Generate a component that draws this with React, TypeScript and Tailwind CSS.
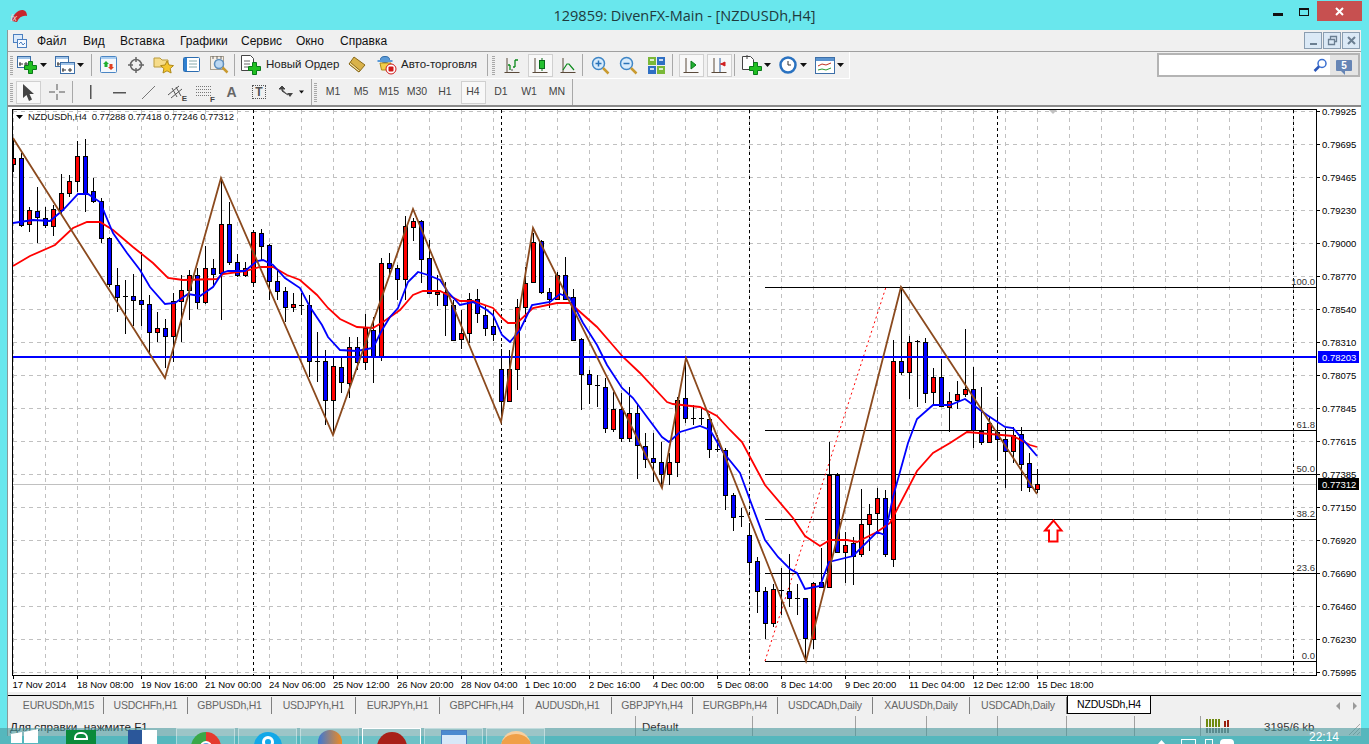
import React from "react";

type C = [number, number, number, number, "r" | "b" | "k"];
const candles: C[] = [
[158,164,138,172,"r"],[158,225,153,227,"b"],[210,224,207,232,"r"],[211,217,187,243,"b"],[218,225,207,228,"b"],[209,226,205,236,"r"],[193,210,174,215,"r"],[181,193,175,197,"r"],[156,181,141,192,"r"],[156,193,139,212,"b"],
[191,201,178,203,"b"],[201,238,198,243,"b"],[238,284,237,287,"b"],[285,297,268,312,"b"],[296,296,280,334,"k"],[296,300,274,326,"b"],[300,304,252,326,"b"],[304,332,295,353,"b"],[328,332,312,342,"r"],[328,336,319,368,"b"],
[301,336,293,362,"r"],[290,301,275,342,"r"],[275,290,270,320,"r"],[275,302,268,309,"b"],[268,302,246,304,"r"],[268,274,259,285,"b"],[224,273,178,320,"r"],[224,262,202,265,"b"],[262,275,254,277,"b"],[268,275,262,277,"r"],
[232,282,230,285,"r"],[233,246,229,260,"b"],[245,281,244,300,"b"],[281,291,270,300,"b"],[291,307,287,322,"b"],[304,307,293,312,"r"],[305,305,293,315,"k"],[305,361,295,377,"b"],[361,361,332,382,"k"],[361,400,350,425,"b"],
[366,400,357,435,"r"],[367,382,357,393,"b"],[347,383,337,398,"r"],[347,362,337,370,"b"],[328,362,314,370,"r"],[330,356,317,383,"b"],[263,356,258,361,"r"],[263,268,253,275,"b"],[268,279,265,300,"b"],[226,279,216,300,"r"],
[221,227,218,241,"r"],[221,259,220,283,"b"],[258,293,240,294,"b"],[292,294,275,306,"r"],[292,305,282,336,"b"],[305,340,300,341,"b"],[333,339,310,349,"r"],[299,333,293,343,"r"],[299,313,289,323,"b"],[315,328,305,336,"b"],
[326,334,310,341,"b"],[369,401,349,417,"b"],[369,401,350,402,"r"],[307,369,299,390,"r"],[283,307,267,322,"r"],[242,282,233,283,"r"],[241,292,240,294,"b"],[292,299,288,308,"b"],[275,299,272,300,"r"],[275,299,257,300,"b"],
[297,340,289,341,"b"],[339,374,338,410,"b"],[374,384,370,404,"b"],[385,385,375,407,"k"],[387,428,378,433,"b"],[409,429,392,432,"r"],[409,438,393,442,"b"],[413,438,387,442,"r"],[413,445,405,479,"b"],[446,459,433,468,"b"],
[458,462,433,482,"b"],[462,474,442,487,"b"],[462,474,453,485,"r"],[400,462,397,477,"r"],[398,418,358,423,"b"],[418,418,405,425,"k"],[418,418,408,425,"k"],[419,449,414,458,"b"],[449,449,435,452,"k"],[450,495,448,510,"b"],
[495,517,493,531,"b"],[516,516,508,527,"k"],[535,562,523,573,"b"],[561,591,557,613,"b"],[591,623,587,639,"b"],[589,623,584,627,"r"],[590,590,568,615,"k"],[591,598,554,607,"b"],[598,598,584,615,"k"],[598,638,598,660,"b"],
[583,639,582,649,"r"],[582,587,548,588,"b"],[475,587,442,588,"r"],[475,552,473,552,"b"],[545,552,532,583,"r"],[543,556,537,585,"b"],[524,554,489,557,"r"],[514,524,504,551,"r"],[498,513,488,533,"r"],[498,554,490,557,"b"],
[361,559,340,567,"r"],[361,372,287,375,"b"],[342,372,336,399,"r"],[341,341,340,407,"k"],[342,393,338,403,"b"],[377,392,368,404,"r"],[377,406,359,407,"b"],[401,407,392,432,"r"],[394,400,381,409,"r"],[389,394,329,397,"r"],
[389,430,367,448,"b"],[431,442,387,445,"b"],[423,442,417,443,"r"],[432,439,397,459,"b"],[439,451,428,488,"b"],[435,451,427,463,"r"],[434,464,427,491,"b"],[463,487,453,492,"b"],[484,489,469,493,"r"],
];

const blueMA = "13,223 33,220 50,221 63,210 78,194 88,194 100,202 113,233 127,253 140,270 150,287 165,304 175,303 188,294 200,296 213,287 222,273 228,271 245,271 257,261 263,260 273,265 285,278 300,288 310,307 322,325 328,337 340,350 357,351 373,348 382,330 390,317 398,308 408,282 418,272 428,275 440,280 448,292 460,305 473,302 487,310 493,315 502,335 510,342 520,330 532,305 550,302 560,294 570,298 583,323 597,345 607,365 622,388 633,398 647,417 662,437 669,442 680,432 700,426 710,430 723,452 740,473 750,500 765,540 778,557 790,569 797,573 805,589 820,586 829,562 853,556 877,532 885,535 893,497 908,443 917,419 933,405 950,405 965,399 987,415 1005,427 1013,428 1037,456";
const redMA = "13,266 30,256 55,245 73,228 87,222 100,222 113,230 133,247 153,263 168,278 183,280 217,279 223,274 245,271 260,267 273,267 287,275 300,280 317,295 328,308 340,319 357,327 373,328 383,322 400,310 413,295 423,291 440,291 450,296 460,301 473,301 493,308 502,318 508,323 517,323 533,308 557,303 570,303 597,327 623,357 640,373 667,402 673,404 700,407 717,416 730,430 742,442 750,457 765,485 793,518 805,536 820,546 830,540 847,540 857,542 877,532 890,523 917,471 933,453 950,443 967,432 1013,436 1030,445 1037,447";
const zig = "13,138 165,378 221,178 333,435 413,209 501,422 533,228 662,488 686,358 806,661 901,287 1037,494";

const prices = ["0.79925","0.79695","0.79465","0.79230","0.79000","0.78770","0.78540","0.78310","0.78075","0.77845","0.77615","0.77385","0.77150","0.76920","0.76690","0.76460","0.76230","0.75995"];
const dates = ["17 Nov 2014","18 Nov 08:00","19 Nov 16:00","21 Nov 00:00","24 Nov 06:00","25 Nov 12:00","26 Nov 20:00","28 Nov 04:00","1 Dec 10:00","2 Dec 16:00","4 Dec 00:00","5 Dec 08:00","8 Dec 14:00","9 Dec 20:00","11 Dec 04:00","12 Dec 12:00","15 Dec 18:00"];
const fibs: [number, string][] = [[287,"100.0"],[430,"61.8"],[474,"50.0"],[519,"38.2"],[573,"23.6"],[661,"0.0"]];
const gridX = Array.from({ length: 41 }, (_, i) => 13.5 + 32 * i);

function Chart() {
  return (
    <svg viewBox="7 107 1354 585" className="block w-[1354px] h-[585px] bg-white overflow-visible" fontSize="9.5" fill="#000">
      <defs><clipPath id="plot"><rect x="13" y="110" width="1303" height="565" /></clipPath></defs>
      <g clipPath="url(#plot)">
        <g stroke="#c0c0c0" strokeDasharray="4 4" shapeRendering="crispEdges">
          {gridX.map((x) => <line key={x} x1={x} x2={x} y1="110" y2="675" />)}
          {prices.map((_, i) => <line key={i} x1="13" x2="1316" y1={111.5 + 33 * i} y2={111.5 + 33 * i} />)}
        </g>
        <g stroke="#000" strokeDasharray="3 3" shapeRendering="crispEdges">
          {[253.5, 501.5, 749.5, 997.5, 1293.5].map((x) => <line key={x} x1={x} x2={x} y1="110" y2="675" />)}
        </g>
        <line x1="13" x2="1316" y1="484.5" y2="484.5" stroke="#c0c0c0" shapeRendering="crispEdges" />
        <g stroke="#000" shapeRendering="crispEdges">
          {fibs.map(([y]) => <line key={y} x1="765" x2="1316" y1={y + 0.5} y2={y + 0.5} />)}
        </g>
        <line x1="765" y1="661" x2="886" y2="287" stroke="#f00" strokeDasharray="2 3" />
        <g shapeRendering="crispEdges">
          {candles.map((c, i) => {
            const x = 13.5 + 8 * i;
            return (
              <g key={i}>
                <line x1={x} x2={x} y1={c[2]} y2={c[3]} stroke="#000" />
                {c[4] === "k"
                  ? <line x1={x - 2.5} x2={x + 2.5} y1={c[0] + 0.5} y2={c[0] + 0.5} stroke="#000" />
                  : <rect x={x - 2} y={c[0] + 0.5} width="4" height={c[1] - c[0]} fill={c[4] === "r" ? "#ff0000" : "#0000ff"} stroke="#000" />}
              </g>
            );
          })}
        </g>
        <polyline points={redMA} fill="none" stroke="#ff0000" strokeWidth="1.8" />
        <polyline points={blueMA} fill="none" stroke="#0000ff" strokeWidth="1.8" />
        <line x1="13" x2="1316" y1="357" y2="357" stroke="#0000ff" strokeWidth="2" shapeRendering="crispEdges" />
        <polyline points={zig} fill="none" stroke="#8b4a1e" strokeWidth="1.8" />
        <path d="M1053.5 520.5 L1061.5 530.5 L1057.5 530.5 L1057.5 541.5 L1049 541.5 L1049 530.5 L1045 530.5 Z" fill="#fff" stroke="#f00" strokeWidth="2" />
        <path d="M1049 110 h8 l-4 4 Z" fill="#c0c0c0" />
      </g>
      {fibs.map(([y, t]) => <text key={t} x="1315" y={y - 2} textAnchor="end" fill="#333">{t}</text>)}
      <rect x="12.5" y="109.5" width="1304" height="566" fill="none" stroke="#000" shapeRendering="crispEdges" />
      {prices.map((p, i) => (
        <g key={p}>
          <line x1="1317" x2="1320" y1={111.5 + 33 * i} y2={111.5 + 33 * i} stroke="#000" shapeRendering="crispEdges" />
          <text x="1322" y={114.5 + 33 * i}>{p}</text>
        </g>
      ))}
      <rect x="1318" y="351" width="41" height="12" fill="#0000ff" />
      <text x="1322" y="360.5" fill="#fff">0.78203</text>
      <rect x="1318" y="478" width="41" height="12" fill="#000" />
      <text x="1322" y="487.5" fill="#fff">0.77312</text>
      {dates.map((d, i) => (
        <g key={d}>
          <line x1={13.5 + 64 * i} x2={13.5 + 64 * i} y1="676" y2="679" stroke="#000" shapeRendering="crispEdges" />
          <text x={(i === 0 ? 12.5 : 13 + 64 * i)} y="688">{d}</text>
        </g>
      ))}
      <path d="M16 115 h7 l-3.5 4 Z" fill="#000" />
      <text x="28" y="120" fontSize="9.5" letterSpacing="-0.1" fill="#111" xmlSpace="preserve">{"NZDUSDh,H4  0.77288 0.77418 0.77246 0.77312"}</text>
    </svg>
  );
}

const Caret = ({ cls }: { cls: string }) => (
  <div className={`flex items-center justify-center shrink-0 ${cls}`}>
    <svg width="7" height="4" viewBox="0 0 7 4"><path d="M0 0h7L3.5 4z" fill="#111" /></svg>
  </div>
);
const Sep = ({ cls = "" }: { cls?: string }) => <div className={`w-[1px] h-[22px] bg-[#a8a8a8] shrink-0 ${cls}`} />;
const Grip = ({ cls = "" }: { cls?: string }) => <div className={`w-[3px] h-[19px] shrink-0 bg-[repeating-linear-gradient(to_bottom,#a8a8a8_0,#a8a8a8_1px,transparent_1px,transparent_2px)] ${cls}`} />;
const Btn = ({ children, cls = "w-[28px]", on = false }: { children?: React.ReactNode; cls?: string; on?: boolean }) => (
  <div className={`h-[24px] flex items-center justify-center shrink-0 ${cls}`}>
    {on ? <div className="w-[25px] h-[23px] flex items-center justify-center bg-[#f8f8f8] border border-[#d0d0d0]">{children}</div> : children}
  </div>
);

const Win = ({ x, y, w = 14, h = 12 }: { x: number; y: number; w?: number; h?: number }) => (
  <g>
    <rect x={x + 0.5} y={y + 0.5} width={w} height={h} fill="#fff" stroke="#3d6fa8" />
    <rect x={x + 1} y={y + 1} width={w - 1} height="2" fill="#9fc3e8" />
    <path d={`M${x + 3} ${y + 6}v4M${x + 2} ${y + 8}h4M${x + w - 4} ${y + 6}v4M${x + w - 6} ${y + 8}h4`} stroke="#333" fill="none" />
  </g>
);
const Plus = ({ x, y }: { x: number; y: number }) => (
  <path d={`M${x + 4} ${y}h4v4h4v4h-4v4h-4v-4h-4v-4h4z`} fill="#21c021" stroke="#0a7a1a" />
);
const IconNew = () => <svg width="22" height="20" viewBox="0 0 22 20"><Win x={0} y={1} w={13} h={11} /><Plus x={7.5} y={6.5} /></svg>;
const IconProf = () => <svg width="22" height="20" viewBox="0 0 22 20"><Win x={1} y={1} w={13} h={10} /><Win x={6} y={7} w={14} h={11} /></svg>;
const IconMarket = () => (
  <svg width="18" height="18" viewBox="0 0 18 18"><rect x="0.5" y="0.5" width="16" height="16" rx="1" fill="#f4f8fc" stroke="#4b86c4" /><rect x="1" y="1" width="15" height="2" fill="#a9cdf0" /><path d="M6 5l3 3H7.5v3h-3V8H3z" fill="#20b030" /><path d="M11 14l3-3h-1.5V8h-3v3H8z" fill="#e04020" /></svg>
);
const IconNav = () => (
  <svg width="18" height="18" viewBox="0 0 18 18" fill="none" stroke="#666"><circle cx="9" cy="9" r="5.5" strokeWidth="1.5" /><path d="M9 1v5M9 12v5M1 9h5M12 9h5" strokeWidth="1.5" /></svg>
);
const IconFav = () => (
  <svg width="22" height="20" viewBox="0 0 22 20"><path d="M1 3h6l2 2h6v7H1z" fill="#f6dc8a" stroke="#b99a3a" /><path d="M14 6l2 4 4.500 .6-3.300 3 .9 4.400-4.100-2.200-4 2.200 .9-4.400-3.300-3 4.500-.6z" fill="#f5c62e" stroke="#b08a18" /></svg>
);
const IconTerm = () => (
  <svg width="18" height="16" viewBox="0 0 18 16"><rect x="0.5" y="0.5" width="16" height="14" rx="1" fill="#fff" stroke="#2b6cb0" /><rect x="1" y="1" width="3" height="13" fill="#2f80d0" /><path d="M6 4h8M6 7h8M6 10h8" stroke="#8aa" /></svg>
);
const IconTester = () => (
  <svg width="20" height="20" viewBox="0 0 20 20"><rect x="0.5" y="1.500" width="13" height="13" fill="#f5efe6" stroke="#a8a090" /><path d="M3 1v3M7 1v3M11 1v3" stroke="#666" /><circle cx="9" cy="9" r="4.500" fill="#bcd8f2" stroke="#5f8fbd" strokeWidth="1.500" /><path d="M12.500 12.500l5 5" stroke="#c99a30" strokeWidth="2.500" /></svg>
);
const IconOrder = () => (
  <svg width="22" height="22" viewBox="0 0 22 22"><path d="M1.500 1.500h9l3 3v12h-12z" fill="#fff" stroke="#444" /><path d="M4 7h6M4 10h6M4 13h4" stroke="#666" /><Plus x={8.5} y={8.5} /></svg>
);
const IconBook = () => (
  <svg width="18" height="18" viewBox="0 0 18 18"><path d="M6 1l11 8-6 7-10-8z" fill="#d9b24a" stroke="#8a6a1a" /><path d="M1 8l10 8 1-1.500L2.500 6.500z" fill="#f5e3a6" stroke="#8a6a1a" /></svg>
);
const IconAuto = () => (
  <svg width="20" height="20" viewBox="0 0 20 20"><ellipse cx="8" cy="4.500" rx="4.500" ry="3" fill="#5b9bd8" stroke="#2f6aa6" /><path d="M0.500 6h15" stroke="#5b9bd8" strokeWidth="2" /><path d="M3 8h11l-1.500 7h-8z" fill="#f2cf4a" stroke="#b08a18" /><circle cx="14" cy="14" r="5" fill="#fff" stroke="#d01818" strokeWidth="1" /><rect x="11.500" y="11.500" width="5" height="5" rx="1" fill="#d01818" /></svg>
);
const Axes = () => <path d="M3 1v15M0.500 15.500h15" stroke="#5a4a3a" fill="none" />;
const IconBars = () => <svg width="16" height="17" viewBox="0 0 16 17" fill="none"><Axes /><path d="M6 13v-5M6 8H4M11 10V3M11 3h3M11 10H9" stroke="#0a8a1a" strokeWidth="1.300" /><path d="M7 13h2" stroke="#555" /></svg>;
const IconCandle = () => <svg width="17" height="17" viewBox="0 0 17 17" fill="none"><Axes /><path d="M10 1v13" stroke="#0a6a1a" /><rect x="7.500" y="3.500" width="5" height="8" fill="#24c030" stroke="#0a6a1a" /></svg>;
const IconLine = () => <svg width="16" height="17" viewBox="0 0 16 17" fill="none"><Axes /><path d="M3 13l4-6 2 0 5 6" stroke="#0a8a1a" strokeWidth="1.200" /></svg>;
const IconZoom = ({ plus }: { plus: boolean }) => (
  <svg width="19" height="19" viewBox="0 0 19 19" fill="none"><circle cx="7.500" cy="7.500" r="6" fill="#d8ebfb" stroke="#3f86c6" strokeWidth="1.500" /><path d="M4.500 7.500h6" stroke="#2a73b8" strokeWidth="1.500" />{plus && <path d="M7.500 4.500v6" stroke="#2a73b8" strokeWidth="1.500" />}<path d="M12 12l5.500 5.500" stroke="#c99a30" strokeWidth="2.500" /></svg>
);
const IconTile = () => (
  <svg width="17" height="17" viewBox="0 0 17 17"><rect width="8" height="8" fill="#7ab838" /><rect x="9" width="8" height="8" fill="#2f6fc4" /><rect y="9" width="8" height="8" fill="#2f6fc4" /><rect x="9" y="9" width="8" height="8" fill="#7ab838" /><path d="M2 3h4M11 3h4M2 12h4M11 12h4" stroke="#fff" strokeWidth="1.500" /></svg>
);
const IconScroll = () => <svg width="17" height="17" viewBox="0 0 17 17" fill="none"><Axes /><path d="M8 4l5 4-5 4z" fill="#20b030" stroke="#0a7a1a" /></svg>;
const IconShift = () => <svg width="17" height="17" viewBox="0 0 17 17" fill="none"><Axes /><path d="M9 1v14" stroke="#2a5a9a" /><path d="M10 7l4-2v4zM9 7h5" fill="#d02020" stroke="#d02020" /></svg>;
const IconInd = () => (
  <svg width="22" height="22" viewBox="0 0 22 22"><path d="M1.500 2.500h8l3 3v10h-11z" fill="#fff" stroke="#444" /><path d="M6 1v4" stroke="#444" /><Plus x={8.5} y={8.5} /></svg>
);
const IconClock = () => (
  <svg width="18" height="18" viewBox="0 0 18 18" fill="none"><circle cx="9" cy="9" r="7.500" fill="#fff" stroke="#2a72c0" strokeWidth="2.500" /><path d="M9 5v4h3" stroke="#333" /></svg>
);
const IconTmpl = () => (
  <svg width="20" height="17" viewBox="0 0 20 17"><rect x="0.500" y="0.500" width="19" height="16" fill="#fff" stroke="#3d6fa8" /><rect x="1" y="1" width="18" height="3" fill="#5b94d0" /><path d="M3 9l4-2 4 1 5-2" stroke="#c03020" fill="none" /><path d="M3 13l4-1 4 1 5-2" stroke="#2a9a30" fill="none" /></svg>
);
const T = ({ children, cls }: { children: React.ReactNode; cls: string }) => <div className={`text-[11.5px] whitespace-nowrap text-[#222] shrink-0 ${cls}`}>{children}</div>;
const Tf = ({ t, on = false }: { t: string; on?: boolean }) => (
  <Btn on={on}><span className="text-[10.5px] text-[#444]">{t}</span></Btn>
);

const menu: [string, string][] = [["Файл","w-[46px]"],["Вид","w-[37px]"],["Вставка","w-[60px]"],["Графики","w-[61px]"],["Сервис","w-[55px]"],["Окно","w-[44px]"],["Справка","w-[60px]"]];
const tabs: [string, string][] = [["EURUSDh,M15","w-[90px]"],["USDCHFh,H1","w-[84px]"],["GBPUSDh,H1","w-[84px]"],["USDJPYh,H1","w-[84px]"],["EURJPYh,H1","w-[84px]"],["GBPCHFh,H4","w-[84px]"],["AUDUSDh,H1","w-[88px]"],["GBPJPYh,H4","w-[81px]"],["EURGBPh,H4","w-[85px]"],["USDCADh,Daily","w-[95px]"],["XAUUSDh,Daily","w-[97px]"],["USDCADh,Daily","w-[97px]"]];
const status = ["w-[117px]","w-[103px]","w-[71px]","w-[71px]","w-[69px]","w-[68px]","w-[66px]"];

export default function App() {
  return (
    <div className="relative w-[1369px] h-[744px] overflow-hidden bg-[#69e7ed] [font-family:'Liberation_Sans',sans-serif] text-black">
      {/* title bar */}
      <div className="h-[30px] relative flex items-center justify-center">
        <svg className="absolute left-[9px] top-[9px]" width="18" height="13" viewBox="0 0 18 13"><path d="M3 12C4 5 9 1 13 1c3 0 5 2 5 6-4-1-8 1-10 6z" fill="#c8262c" /><text x="1" y="12" fontSize="9" fontStyle="italic" fill="#e8d8d8">fx</text></svg>
        <span className="text-[14.5px] text-[#1f3a3d] [font-family:'Open_Sans',sans-serif] pt-[1px]">129859: DivenFX-Main - [NZDUSDh,H4]</span>
        <div className="absolute w-[10px] h-[3px] bg-[#111] left-[1273px] top-[13px]" />
        <div className="absolute h-[8px] border border-[#111] border-t-[2px] left-[1299px] top-[8px] w-[10px]" />
        <div className="absolute left-[1317px] top-[1px] w-[45px] h-[20px] bg-[#c75050] flex items-center justify-center">
          <svg width="9" height="9" viewBox="0 0 9 9"><path d="M1 1l7 7M8 1l-7 7" stroke="#fff" strokeWidth="2" /></svg>
        </div>
      </div>
      {/* window body */}
      <div className="ml-[7px] w-[1354px] flex flex-col bg-[#f0f0f0]">
        {/* menu */}
        <div className="h-[22px] border-b border-[#a0a0a0] flex items-center pl-[6px] relative">
          <svg width="14" height="14" viewBox="0 0 14 14" className="shrink-0 mr-[10px]"><rect x="0.500" y="0.500" width="9" height="8" fill="#dbeafb" stroke="#4c7fc0" /><rect x="4.500" y="5.500" width="9" height="8" fill="#f4f9ff" stroke="#4c7fc0" /><path d="M6 10l2-2 2 3 2-2" stroke="#4c7fc0" fill="none" /></svg>
          {menu.map(([m, w]) => <div key={m} className={`text-[12px] text-[#111] shrink-0 ${w}`}>{m}</div>)}
          <div className="absolute right-[1px] top-[2px] flex gap-[1px]">
            {["min","res","cls"].map((k) => (
              <div key={k} className="w-[18px] h-[17px] bg-[#dbe9f6] border border-[#8a9db0] flex items-center justify-center">
                <svg width="11" height="11" viewBox="0 0 11 11" fill="none" stroke="#6b7f92">
                  {k === "min" && <path d="M2 9h7" strokeWidth="2" />}
                  {k === "res" && <path d="M1.500 4.500h6v5h-6zM3.500 4V1.500h6v5H8" strokeWidth="1.300" />}
                  {k === "cls" && <path d="M2 2l7 7M9 2l-7 7" strokeWidth="2" />}
                </svg>
              </div>
            ))}
          </div>
        </div>
        {/* toolbar 1 */}
        <div className="h-[27px] flex items-center pl-[3px] relative">
          <div className="flex items-center h-full border-r border-b border-white pr-[5px]">
            <Grip cls="mr-[3px]" />
            <Btn cls="w-[24px]"><IconNew /></Btn><Caret cls="w-[7px]" />
            <Btn cls="w-[24px] ml-[6px]"><IconProf /></Btn><Caret cls="w-[7px]" />
            <Sep cls="ml-[7px] mr-[4px]" />
            <Btn cls="w-[26px]"><IconMarket /></Btn>
            <Btn><IconNav /></Btn><Btn><IconFav /></Btn><Btn><IconTerm /></Btn><Btn><IconTester /></Btn>
            <Sep cls="mr-[4px]" />
            <Btn cls="w-[24px]"><IconOrder /></Btn>
            <T cls="ml-[3px] w-[79px]">Новый Ордер</T>
            <Btn cls="w-[24px]"><IconBook /></Btn>
            <Btn cls="w-[28px] ml-[4px]"><IconAuto /></Btn>
            <T cls="w-[82px]">Авто-торговля</T>
            <Sep cls="ml-[4px]" />
            <Grip cls="ml-[4px] mr-[3px]" />
            <Btn><IconBars /></Btn><Btn on><IconCandle /></Btn><Btn><IconLine /></Btn>
            <Sep cls="mr-[3px]" />
            <Btn><IconZoom plus /></Btn><Btn><IconZoom plus={false} /></Btn><Btn><IconTile /></Btn>
            <Sep cls="ml-[2px] mr-[4px]" />
            <Btn on><IconScroll /></Btn><Btn on><IconShift /></Btn>
            <Sep cls="ml-[1px] mr-[5px]" />
            <Btn cls="w-[24px]"><IconInd /></Btn><Caret cls="w-[7px]" />
            <Btn cls="w-[24px] ml-[5px]"><IconClock /></Btn><Caret cls="w-[7px]" />
            <Btn cls="w-[24px] ml-[6px]"><IconTmpl /></Btn><Caret cls="w-[7px]" />
          </div>
          <div className="absolute left-[1150px] top-[1px] w-[173px] h-[24px] bg-white border-2 border-[#b4b4b4] border-r-0 flex items-center justify-end pr-[3px]">
            <svg width="14" height="15" viewBox="0 0 14 15" fill="none"><circle cx="9" cy="5.500" r="4" stroke="#3a6fd0" strokeWidth="1.500" /><path d="M6 8.500L1.500 13" stroke="#2a55b8" strokeWidth="2.500" /></svg>
          </div>
          <div className="absolute left-[1323px] top-[1px] w-[30px] h-[24px] bg-[#e4e4e4] border-2 border-l-0 border-[#b4b4b4] flex items-center justify-center">
            <div className="relative w-[16px] h-[11px] bg-[#6685b5] rounded-[1px] text-white text-[10px] font-bold leading-[11px] text-center">5<div className="absolute left-[5px] top-[11px] w-0 h-0 border-l-[4px] border-l-transparent border-t-[4px] border-t-[#6685b5]" /></div>
          </div>
        </div>
        {/* toolbar 2 */}
        <div className="h-[26px] flex items-center pl-[3px] border-b-[2px] border-[#8a8a8a] box-content">
          <div className="flex items-center h-full border-r border-[#a8a8a8]">
            <Grip cls="mr-[1px]" />
            <Btn on><svg width="13" height="17" viewBox="0 0 13 17"><path d="M1 0v14l3.500-3 2.500 6 3-1.500-2.500-5.500H12z" fill="#444" /></svg></Btn>
            <Btn cls="w-[30px]"><svg width="16" height="16" viewBox="0 0 16 16" fill="none" stroke="#555"><path d="M8 0v6M8 10v6M0 8h6M10 8h6" /></svg></Btn>
            <Sep cls="mr-[2px]" />
            <Btn cls="w-[30px]"><svg width="3" height="14"><rect width="1.500" height="14" x="1" fill="#555" /></svg></Btn>
            <Btn cls="w-[29px]"><svg width="13" height="3"><rect width="13" height="1.500" y="1" fill="#555" /></svg></Btn>
            <Btn><svg width="15" height="15" viewBox="0 0 15 15" fill="none" stroke="#777"><path d="M1 14L14 1" /></svg></Btn>
            <Btn cls="relative w-[28px]"><svg width="18" height="16" viewBox="0 0 18 16" fill="none" stroke="#555"><path d="M1 11L12 2M4 14L15 5M5 4l5 9M9 3l5 9" /></svg><span className="absolute right-[3px] bottom-[1px] text-[8px] font-bold leading-none text-[#444]">E</span></Btn>
            <Btn cls="relative w-[28px]"><svg width="16" height="12" viewBox="0 0 16 12" fill="none" stroke="#777" strokeDasharray="1 1"><path d="M0 .500h15M0 3.500h15M0 6.500h15M0 9.500h15" /></svg><span className="absolute right-[3px] bottom-[0px] text-[8px] font-bold leading-none text-[#444]">F</span></Btn>
            <Btn cls="w-[27px]"><span className="text-[14px] font-bold text-[#666]">A</span></Btn>
            <Btn><div className="w-[14px] h-[14px] border border-dotted border-[#555] flex items-center justify-center text-[12px] font-bold leading-none text-[#555]">T</div></Btn>
            <Btn cls="w-[26px]"><svg width="14" height="13" viewBox="0 0 14 13"><path d="M3 0l3 3H0zM3 3v2L9 9" stroke="#444" fill="#444" /><path d="M8 7h6l-3 4z" fill="#444" /></svg></Btn>
            <Caret cls="w-[5px] mr-[7px]" />
          </div>
          <Grip cls="ml-[2px] mr-[2px]" />
          <Tf t="M1" /><Tf t="M5" /><Tf t="M15" /><Tf t="M30" /><Tf t="H1" /><Tf t="H4" on /><Tf t="D1" /><Tf t="W1" /><Tf t="MN" />
          <div className="w-[1px] h-full bg-[#a8a8a8] ml-[1px]" />
        </div>
        {/* chart */}
        <Chart />
        {/* tabs */}
        <div className="mt-[3px] h-[21px] border-t border-black flex items-start pl-[7px] relative">
          {tabs.map(([t, w], i) => (
            <div key={i} className={`h-[17px] mt-[1px] flex items-center justify-center border-r border-[#808080] text-[10.5px] tracking-[-0.2px] text-[#666] shrink-0 ${w}`}>{t}</div>
          ))}
          <div className="w-[84px] h-[18px] shrink-0 bg-white border-x border-b border-black flex items-center justify-center text-[10.5px] tracking-[-0.2px] text-black">NZDUSDh,H4</div>
          <svg className="absolute left-[1329px] top-[6px]" width="24" height="8" viewBox="0 0 24 8" fill="#9a9a9a"><path d="M4 0v8L0 4zM17 0v8l4-4z" /></svg>
        </div>
        {/* status */}
        <div className="h-[20px] flex items-start relative">
          <div className="w-[628px] h-full pl-[3px] pt-[4px] text-[11.7px] leading-[14px] text-[#222] shrink-0">Для справки, нажмите F1</div>
          {status.map((w, i) => (
            <div key={i} className={`h-full border-l border-[#a0a0a0] pl-[6px] pt-[4px] text-[11.5px] leading-[14px] text-[#333] shrink-0 ${w}`}>{i === 0 ? "Default" : ""}</div>
          ))}
          <div className="h-full border-l border-[#a0a0a0] pl-[5px] pt-[3px] shrink-0 w-[161px] flex">
            <svg width="24" height="14" viewBox="0 0 24 14" className="shrink-0"><g fill="#6f8a10">{[0,3,6,9,12].map((x) => <rect key={x} x={x} y={0} width="2" height="8" />)}</g><g fill="#9a2010"><rect x="18" y="2" width="2" height="6" /><rect x="21" y="1" width="2" height="7" /></g><g fill="#777">{[0,3,6,9,12,15,18,21].map((x) => <rect key={x} x={x} y={9} width="2" height="5" />)}</g></svg>
            <span className="ml-[34px] pt-[1px] text-[11.5px] leading-[14px] text-[#333]">3195/6 kb</span>
          </div>
          <svg className="absolute right-0 bottom-0" width="13" height="13" viewBox="0 0 13 13" stroke="#a8a8a8" fill="none"><path d="M12 1L1 12M12 5L5 12M12 9L9 12" /></svg>
        </div>
      </div>
      <div className="absolute left-[7px] top-[30px] h-[706px] w-[1px] bg-[#8a9a9a]" />
      {/* taskbar */}
      <div className="absolute left-0 right-0 top-[728px] h-[16px] bg-[#48989d]/60 overflow-hidden flex items-start pl-[11px]">
        <svg width="27" height="28" viewBox="0 0 27 28" className="shrink-0 mt-[1px]"><path d="M0 5l11-2v11H0zM13 3l14-3v14H13z" fill="#fff" /></svg>
        <div className="w-[30px] h-[20px] bg-[#0a8a3a] ml-[28px] mt-[2px] shrink-0 flex justify-center"><div className="w-[14px] h-[8px] mt-[2px] border-2 border-white rounded-t-[6px]" /></div>
        <div className="w-[29px] h-[20px] ml-[32px] mt-[2px] shrink-0 bg-white flex"><div className="w-[14px] h-full bg-[#2b579a]" /></div>
        <div className="ml-[19px] flex gap-[3px] shrink-0">
          {[
            <div key="c" className="w-[30px] h-[30px] mt-[3px] rounded-full bg-[conic-gradient(#e53a2e_0_35%,#f6c020_35%_65%,#3aa848_65%)] flex items-center justify-center"><div className="w-[12px] h-[12px] rounded-full bg-[#5aa0e8] border-2 border-white" /></div>,
            <div key="s" className="w-[28px] h-[28px] mt-[3px] rounded-full bg-[#12a8e8] flex items-center justify-center"><div className="w-[12px] h-[12px] rounded-full border-[3px] border-white -mt-[8px]" /></div>,
            <div key="f" className="w-[24px] h-[28px] mt-[1px] rounded-full bg-[linear-gradient(90deg,#3a78d8,#f08a20)]" />,
            <div key="m" className="w-[30px] h-[30px] mt-[3px] rounded-full bg-[#a82018]" />,
            <div key="w" className="w-[26px] h-[24px] mt-[1px] bg-[#d8e8f8] border border-[#4c7fc0]"><div className="h-[4px] bg-[#4c8ad0]" /></div>,
            <div key="o" className="w-[30px] h-[30px] mt-[2px] rounded-full bg-[#f0a048] border-t-[3px] border-[#f8d0a0]" />,
          ].map((ic, i) => (
            <div key={i} className={`w-[59px] h-[16px] border border-b-0 flex justify-center bg-white/15 ${i === 3 ? "border-white" : "border-white/40"}`}>{ic}</div>
          ))}
        </div>
        <div className="absolute left-[1157px] top-[11px] flex gap-[7px] text-white">
          <svg width="9" height="5" viewBox="0 0 9 5" className="mt-[1px]"><path d="M4.500 0L9 5H0z" fill="#fff" /></svg>
          <div className="w-[15px] h-[8px] border border-white ml-[8px]" />
          <div className="w-[8px] h-[8px] border border-white ml-[2px]" />
          <div className="w-[14px] h-[8px] bg-white rounded-t-[4px]" />
        </div>
        <div className="absolute left-[1309px] top-[3px] text-[12px] leading-[13px] text-white">22:14</div>
      </div>
    </div>
  );
}
